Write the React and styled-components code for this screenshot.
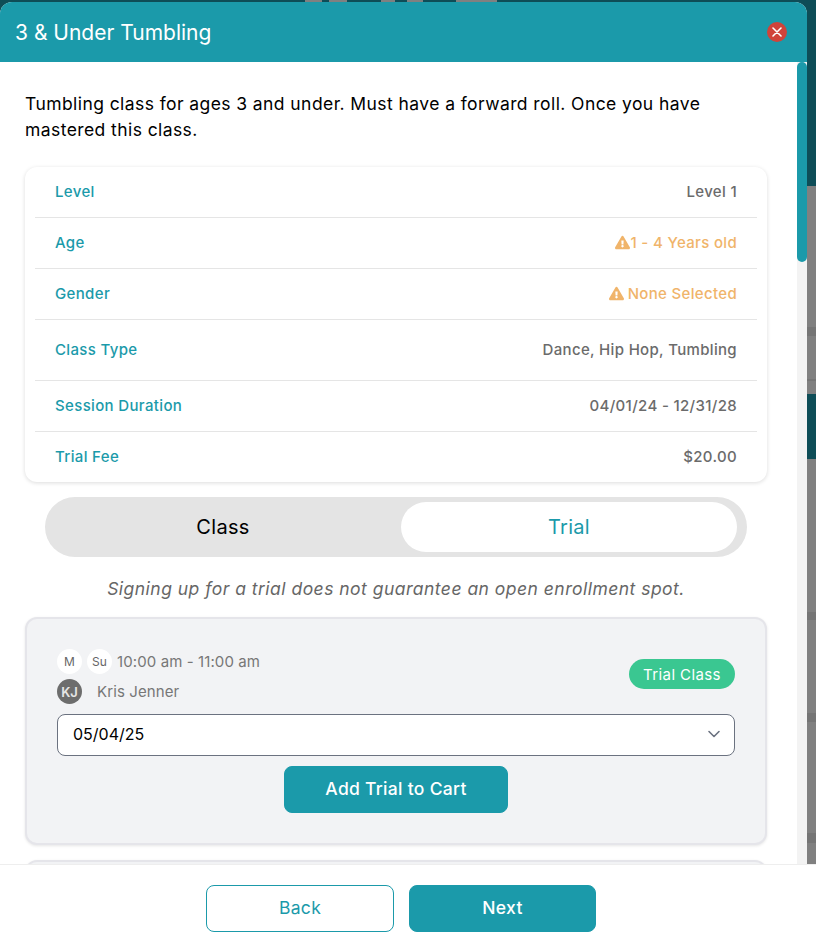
import React from "react";
import styled, { createGlobalStyle } from "styled-components";
import { FaExclamationTriangle } from "react-icons/fa";

const GlobalStyle = createGlobalStyle`
  html, body { margin: 0; padding: 0; }
  body { font-family: Inter, "Open Sans", Arial, sans-serif; background: #0e4d57; }
  * { box-sizing: border-box; }
`;

const teal = "#1b9aaa";

const Stage = styled.div`
  width: 816px;
  height: 936px;
  overflow: hidden;
  display: flex;
  flex-direction: column;
  background: #0e4d57;
`;

// Page behind the modal, barely visible
const TopStrip = styled.div`
  height: 2px;
  flex: none;
  padding-left: 305px;
  display: flex;
`;

const Peek = styled.span`
  height: 2px;
  width: ${(p) => p.$w}px;
  margin-right: ${(p) => p.$gap || 0}px;
  background: #808080;
`;

const Middle = styled.div`
  flex: 1;
  min-height: 0;
  display: flex;
`;

const SideStrip = styled.div`
  width: 9px;
  flex: none;
  display: flex;
  flex-direction: column;
`;

const SideBlock = styled.div`
  height: ${(p) => p.$h}px;
  flex: none;
  background: ${(p) => p.$c};
`;

const Modal = styled.div`
  width: 807px;
  flex: none;
  display: flex;
  flex-direction: column;
  background: #fff;
  border-radius: 12px 12px 0 0;
  overflow: hidden;
`;

const Header = styled.header`
  height: 60px;
  flex: none;
  background: ${teal};
  display: flex;
  align-items: center;
  justify-content: space-between;
  padding: 0 20px 0 15px;
`;

const Title = styled.h1`
  margin: 0;
  font-size: 21px;
  font-weight: 400;
  color: #fff;
`;

const CloseButton = styled.button`
  width: 20px;
  height: 20px;
  padding: 0;
  border: 0;
  border-radius: 50%;
  background: #d0433a;
  display: flex;
  align-items: center;
  justify-content: center;
`;

const Body = styled.div`
  flex: 1;
  min-height: 0;
  display: flex;
`;

const Content = styled.main`
  flex: 1;
  min-width: 0;
  overflow: hidden;
  padding: 29px 30px 0 25px;
`;

const Track = styled.div`
  width: 10px;
  flex: none;
  background: #f3f3f3;
`;

const Thumb = styled.div`
  height: 200px;
  background: ${teal};
  border-radius: 5px;
`;

const Description = styled.p`
  margin: 0 0 24px;
  font-size: 17.5px;
  line-height: 26px;
  letter-spacing: 0.42px;
  color: #000;
`;

const InfoCard = styled.section`
  background: #fff;
  border-radius: 12px;
  padding: 0 10px;
  box-shadow: 0 1px 4px rgba(0, 0, 0, 0.14);
`;

const InfoRow = styled.div`
  height: ${(p) => p.$h || 51}px;
  display: flex;
  align-items: center;
  justify-content: space-between;
  padding: 0 20px 2px;
  border-bottom: ${(p) => (p.$last ? "none" : "1px solid #e5e5e5")};
`;

const Label = styled.span`
  font-size: 15px;
  font-weight: 500;
  letter-spacing: 0.35px;
  color: ${teal};
`;

const Value = styled.span`
  display: flex;
  align-items: center;
  gap: ${(p) => p.$gap || 0}px;
  font-size: 15px;
  font-weight: 500;
  letter-spacing: 0.33px;
  color: ${(p) => (p.$warn ? "#f0b46a" : "#6b6b6b")};
`;

const Toggle = styled.div`
  height: 60px;
  margin: 15px 20px 0;
  padding: 5px 10px 5px 0;
  display: grid;
  grid-template-columns: 356px 336px;
  background: #e4e4e4;
  border-radius: 30px;
`;

const ToggleOption = styled.div`
  display: flex;
  align-items: center;
  justify-content: center;
  font-size: 20px;
  letter-spacing: 0.3px;
  color: ${(p) => (p.$active ? teal : "#000")};
  background: ${(p) => (p.$active ? "#fff" : "transparent")};
  border-radius: 25px;
`;

const Note = styled.p`
  margin: 20px 0 16px;
  font-size: 17.5px;
  line-height: 24px;
  letter-spacing: 0.48px;
  font-style: italic;
  text-align: center;
  color: #666;
`;

const ClassCard = styled.section`
  height: 228px;
  margin-bottom: 15px;
  padding: 30px 30px 0;
  background: #f2f3f5;
  border: 2px solid #e5e5ea;
  border-radius: 12px;
  box-shadow: 0 1px 3px rgba(0, 0, 0, 0.1);
`;

const CardTop = styled.div`
  height: 55px;
  display: flex;
  align-items: center;
  justify-content: space-between;
`;

const Stack = styled.div`
  display: flex;
  flex-direction: column;
  gap: 5px;
`;

const Line = styled.div`
  display: flex;
  align-items: center;
  gap: 5px;
`;

const Day = styled.span`
  width: 25px;
  height: 25px;
  border-radius: 50%;
  background: #fff;
  display: flex;
  align-items: center;
  justify-content: center;
  font-size: 12px;
  color: #666;
`;

const Avatar = styled.span`
  width: 25px;
  height: 25px;
  border-radius: 50%;
  background: #6d6d6d;
  display: flex;
  align-items: center;
  justify-content: center;
  font-size: 13px;
  font-weight: 600;
  color: #e6e6e6;
`;

const MutedText = styled.span`
  font-size: 15px;
  letter-spacing: 0.1px;
  color: #777;
  margin-left: ${(p) => p.$indent || 0}px;
`;

const Badge = styled.span`
  width: 106px;
  height: 30px;
  margin-bottom: 5px;
  border-radius: 15px;
  background: #3ac791;
  display: flex;
  align-items: center;
  justify-content: center;
  font-size: 15px;
  letter-spacing: 0.4px;
  color: #fff;
`;

const DateSelect = styled.div`
  height: 42px;
  margin-top: 10px;
  padding: 0 13px 2px 15px;
  display: flex;
  align-items: center;
  justify-content: space-between;
  background: #fff;
  border: 1px solid #6b7280;
  border-radius: 8px;
  font-size: 16px;
  color: #000;
`;

const CardAction = styled.div`
  display: flex;
  justify-content: center;
  margin-top: 10px;
`;

const Button = styled.button`
  width: ${(p) => p.$w}px;
  height: 47px;
  padding: 0 0 2px;
  border-radius: 8px;
  border: 1px solid ${teal};
  background: ${(p) => (p.$outline ? "#fff" : teal)};
  color: ${(p) => (p.$outline ? teal : "#fff")};
  font-family: inherit;
  font-size: 17.5px;
  letter-spacing: 0.3px;
  font-weight: ${(p) => (p.$outline ? 400 : 500)};
`;

const Footer = styled.footer`
  height: 72px;
  flex: none;
  background: #fff;
  border-top: 1px solid #eee;
  padding: 20px 14px 0 0;
  display: flex;
  justify-content: center;
  gap: 15px;
`;

const rows = [
  { label: "Level", value: "Level 1" },
  { label: "Age", value: "1 - 4 Years old", warn: true },
  { label: "Gender", value: "None Selected", warn: true, gap: 4 },
  { label: "Class Type", value: "Dance, Hip Hop, Tumbling", h: 61 },
  { label: "Session Duration", value: "04/01/24 - 12/31/28" },
  { label: "Trial Fee", value: "$20.00", h: 50, last: true },
];

const sideBlocks = [
  { h: 184, c: "#0e4d57" },
  { h: 141, c: "#808080" },
  { h: 9, c: "#757575" },
  { h: 43, c: "#808080" },
  { h: 2, c: "#757575" },
  { h: 13, c: "#808080" },
  { h: 65, c: "#0e4d57" },
  { h: 153, c: "#808080" },
  { h: 8, c: "#757575" },
  { h: 93, c: "#808080" },
  { h: 9, c: "#757575" },
  { h: 111, c: "#808080" },
  { h: 10, c: "#757575" },
  { h: 21, c: "#808080" },
];

const App = () => (
  <Stage>
    <GlobalStyle />
    <TopStrip>
      <Peek $w={17} $gap={7} />
      <Peek $w={18} $gap={34} />
      <Peek $w={14} $gap={12} />
      <Peek $w={16} $gap={33} />
      <Peek $w={41} />
    </TopStrip>
    <Middle>
      <Modal>
        <Header>
          <Title>3 &amp; Under Tumbling</Title>
          <CloseButton aria-label="Close">
            <svg width="10" height="10" viewBox="0 0 10 10">
              <path d="M1 1l8 8M9 1l-8 8" stroke="#fff" strokeWidth="1.6" strokeLinecap="round" />
            </svg>
          </CloseButton>
        </Header>
        <Body>
          <Content>
            <Description>
              Tumbling class for ages 3 and under. Must have a forward roll. Once you have mastered this class.
            </Description>
            <InfoCard>
              {rows.map((row) => (
                <InfoRow key={row.label} $h={row.h} $last={row.last}>
                  <Label>{row.label}</Label>
                  <Value $warn={row.warn} $gap={row.gap}>
                    {row.warn && <FaExclamationTriangle size={15} />}
                    {row.value}
                  </Value>
                </InfoRow>
              ))}
            </InfoCard>
            <Toggle>
              <ToggleOption>Class</ToggleOption>
              <ToggleOption $active>Trial</ToggleOption>
            </Toggle>
            <Note>Signing up for a trial does not guarantee an open enrollment spot.</Note>
            <ClassCard>
              <CardTop>
                <Stack>
                  <Line>
                    <Day>M</Day>
                    <Day>Su</Day>
                    <MutedText>10:00 am - 11:00 am</MutedText>
                  </Line>
                  <Line>
                    <Avatar>KJ</Avatar>
                    <MutedText $indent={10}>Kris Jenner</MutedText>
                  </Line>
                </Stack>
                <Badge>Trial Class</Badge>
              </CardTop>
              <DateSelect>
                05/04/25
                <svg width="14" height="14" viewBox="0 0 14 14" fill="none">
                  <path d="M2 4.5l5 5 5-5" stroke="#6b7280" strokeWidth="1.6" strokeLinecap="round" strokeLinejoin="round" />
                </svg>
              </DateSelect>
              <CardAction>
                <Button $w={224}>Add Trial to Cart</Button>
              </CardAction>
            </ClassCard>
            <ClassCard />
          </Content>
          <Track>
            <Thumb />
          </Track>
        </Body>
      </Modal>
      <SideStrip>
        {sideBlocks.map((b, i) => (
          <SideBlock key={i} $h={b.h} $c={b.c} />
        ))}
      </SideStrip>
    </Middle>
    <Footer>
      <Button $w={188} $outline>Back</Button>
      <Button $w={187}>Next</Button>
    </Footer>
  </Stage>
);

export default App;
